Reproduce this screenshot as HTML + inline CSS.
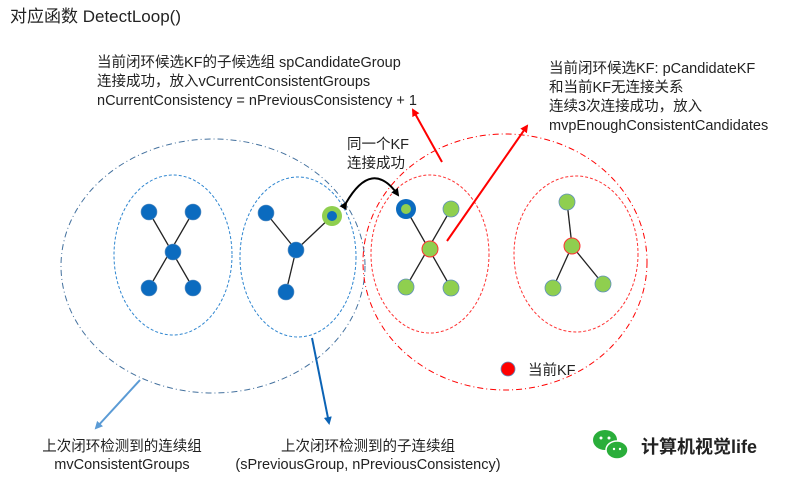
<!DOCTYPE html>
<html><head><meta charset="utf-8"><style>
body{margin:0;width:804px;height:483px;background:#fff;overflow:hidden;font-family:"Liberation Sans","Noto Sans CJK SC",sans-serif;}
</style></head><body>
<svg width="804" height="483" xmlns="http://www.w3.org/2000/svg" font-family="Liberation Sans, Noto Sans CJK SC, sans-serif">
<defs>
<marker id="ar" markerWidth="8" markerHeight="8" refX="6" refY="4" orient="auto" markerUnits="userSpaceOnUse"><path d="M0,0 L8,4 L0,8 z" fill="#f00"/></marker>
<marker id="ab" markerWidth="8" markerHeight="8" refX="6" refY="4" orient="auto" markerUnits="userSpaceOnUse"><path d="M0,0 L8,4 L0,8 z" fill="#0b63b5"/></marker>
<marker id="al" markerWidth="8" markerHeight="8" refX="6" refY="4" orient="auto" markerUnits="userSpaceOnUse"><path d="M0,0 L8,4 L0,8 z" fill="#5b9bd5"/></marker>
<marker id="ak" markerWidth="8" markerHeight="8" refX="6" refY="4" orient="auto" markerUnits="userSpaceOnUse"><path d="M0,0 L8,4 L0,8 z" fill="#000"/></marker>
</defs>
<text x="10" y="22" font-size="17" fill="#222">对应函数 DetectLoop()</text>
<g font-size="14.5" fill="#222">
<text x="97" y="67">当前闭环候选KF的子候选组 spCandidateGroup</text>
<text x="97" y="86">连接成功，放入vCurrentConsistentGroups</text>
<text x="97" y="105">nCurrentConsistency = nPreviousConsistency + 1</text>
<text x="549" y="73">当前闭环候选KF: pCandidateKF</text>
<text x="549" y="92">和当前KF无连接关系</text>
<text x="549" y="111">连续3次连接成功，放入</text>
<text x="549" y="130">mvpEnoughConsistentCandidates</text>
<text x="347" y="149">同一个KF</text>
<text x="347" y="168">连接成功</text>
<text x="122" y="451" text-anchor="middle">上次闭环检测到的连续组</text>
<text x="122" y="469" text-anchor="middle">mvConsistentGroups</text>
<text x="368" y="451" text-anchor="middle">上次闭环检测到的子连续组</text>
<text x="368" y="469" text-anchor="middle">(sPreviousGroup, nPreviousConsistency)</text>
<text x="528" y="375">当前KF</text>
</g>
<ellipse cx="213" cy="266" rx="152" ry="127" fill="none" stroke="#44719e" stroke-width="1" stroke-dasharray="6,3,1,3"/>
<ellipse cx="505" cy="262" rx="142" ry="128" fill="none" stroke="#f00" stroke-width="1" stroke-dasharray="6,3,1,3"/>
<g fill="none" stroke-dasharray="3,2" stroke-width="1">
<ellipse cx="173" cy="255" rx="59" ry="80" stroke="#2f86d0"/>
<ellipse cx="298" cy="257" rx="58" ry="80" stroke="#2f86d0"/>
<ellipse cx="430" cy="254" rx="59" ry="79" stroke="#f33"/>
<ellipse cx="576" cy="254" rx="62" ry="78" stroke="#f33"/>
</g>
<g stroke="#222" stroke-width="1.3">
<line x1="149" y1="212" x2="193" y2="288"/><line x1="193" y1="212" x2="149" y2="288"/>
<line x1="266" y1="213" x2="296" y2="250"/><line x1="332" y1="216" x2="296" y2="250"/><line x1="296" y1="250" x2="286" y2="292"/>
<line x1="406" y1="209" x2="451" y2="288"/><line x1="451" y1="209" x2="406" y2="287"/>
<line x1="567" y1="202" x2="572" y2="246"/><line x1="572" y1="246" x2="553" y2="288"/><line x1="572" y1="246" x2="603" y2="284"/>
</g>
<g fill="#0b6bbf" stroke="#5f8fbf" stroke-width="0.6">
<circle cx="149" cy="212" r="8"/><circle cx="193" cy="212" r="8"/><circle cx="173" cy="252" r="8"/><circle cx="149" cy="288" r="8"/><circle cx="193" cy="288" r="8"/>
<circle cx="266" cy="213" r="8"/><circle cx="296" cy="250" r="8"/><circle cx="286" cy="292" r="8"/>
</g>
<circle cx="332" cy="216" r="10" fill="#8fcf4f"/><circle cx="332" cy="216" r="5" fill="#0b6bbf"/>
<circle cx="406" cy="209" r="10" fill="#0b6bbf"/><circle cx="406" cy="209" r="5" fill="#8fcf4f"/>
<g fill="#8fcf4f" stroke="#5f8fbf" stroke-width="0.8">
<circle cx="451" cy="209" r="8"/><circle cx="406" cy="287" r="8"/><circle cx="451" cy="288" r="8"/>
<circle cx="567" cy="202" r="8"/><circle cx="553" cy="288" r="8"/><circle cx="603" cy="284" r="8"/>
</g>
<circle cx="430" cy="249" r="8" fill="#8fcf4f" stroke="#f33" stroke-width="1"/>
<circle cx="572" cy="246" r="8" fill="#8fcf4f" stroke="#f33" stroke-width="1"/>
<circle cx="508" cy="369" r="7" fill="#f00" stroke="#5f8fbf" stroke-width="0.8"/>
<line x1="442" y1="162" x2="413" y2="110" stroke="#f00" stroke-width="2" marker-end="url(#ar)"/>
<line x1="447" y1="241" x2="527" y2="126" stroke="#f00" stroke-width="2" marker-end="url(#ar)"/>
<line x1="140" y1="380" x2="96" y2="428" stroke="#5b9bd5" stroke-width="2" marker-end="url(#al)"/>
<line x1="312" y1="338" x2="329" y2="423" stroke="#0b63b5" stroke-width="2" marker-end="url(#ab)"/>
<path d="M346,203 Q372,158 398,195" fill="none" stroke="#000" stroke-width="2" marker-start="url(#ak)" marker-end="url(#ak)"/>
<g transform="translate(592,430)">
<ellipse cx="13" cy="10" rx="12" ry="10" fill="#2aae3a"/>
<ellipse cx="25" cy="20" rx="11" ry="9" fill="#2aae3a" stroke="#fff" stroke-width="1.5"/>
<circle cx="9" cy="8" r="1.5" fill="#fff"/><circle cx="17" cy="8" r="1.5" fill="#fff"/>
<circle cx="22" cy="19" r="1.2" fill="#fff"/><circle cx="28" cy="19" r="1.2" fill="#fff"/>
</g>
<text x="641" y="453" font-size="18" font-weight="bold" fill="#222">计算机视觉life</text>
</svg>
</body></html>
